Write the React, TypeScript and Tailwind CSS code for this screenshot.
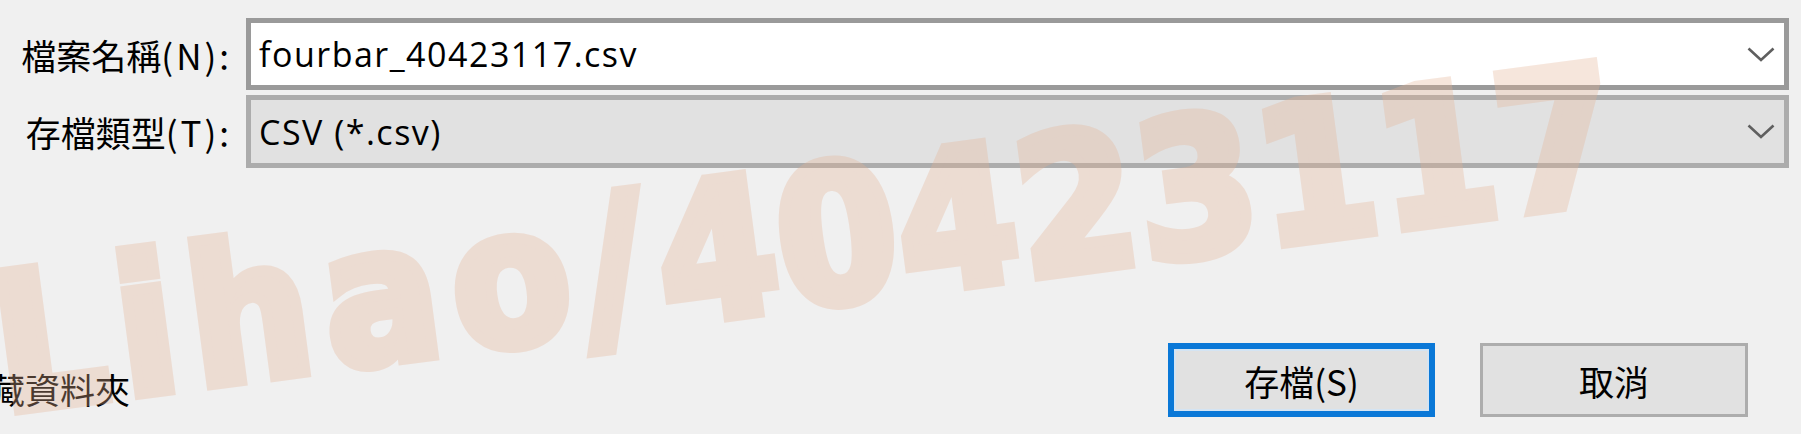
import React from "react";

function Chevron() {
  return (
    <svg width="28" height="15" viewBox="0 0 28 15" fill="none" className="shrink-0">
      <polyline points="1.5,1.5 14,13 26.5,1.5" stroke="#5f5f5f" strokeWidth="2.6" />
    </svg>
  );
}

function Field({ label, value, filled }: { label: React.ReactNode; value: string; filled?: boolean }) {
  return (
    <div className="flex items-center">
      <div className="w-[246px] shrink-0 pr-[14px] text-right text-[35px] leading-none text-black">{label}</div>
      <div
        className={
          filled
            ? "flex h-[73px] w-[1543px] items-center justify-between border-[5px] border-[#acacac] bg-[#e1e1e1] pl-[8px] pr-[9px]"
            : "flex h-[72px] w-[1543px] items-center justify-between border-[5px] border-[#9a9a9a] bg-white pl-[8px] pr-[9px]"
        }
      >
        <span className="font-['Open_Sans','Noto_Sans_CJK_TC',sans-serif] text-[34px] leading-none tracking-[1.5px] text-black">
          {value}
        </span>
        <Chevron />
      </div>
    </div>
  );
}

export default function App() {
  return (
    <div className="relative h-[434px] w-[1801px] overflow-hidden bg-[#f0f0f0] font-['Noto_Sans_CJK_TC',sans-serif]">
      <div className="flex flex-col gap-[5px] pt-[18px]">
        <Field
          label={
            <>
              檔案名稱<span className="tracking-[3px]">(N):</span>
            </>
          }
          value="fourbar_40423117.csv"
        />
        <Field
          label={
            <>
              存檔類型<span className="tracking-[3px]">(T):</span>
            </>
          }
          value="CSV (*.csv)"
          filled
        />
      </div>

      <div className="mt-[175px] flex items-start pr-[53px]">
        <div className="ml-[-45px] mt-[28px] text-[35px] leading-none text-black">隱藏資料夾</div>
        <div className="ml-auto flex gap-[45px]">
          <button className="flex h-[74px] w-[267px] items-center justify-center border-[6px] border-[#0a78d7] bg-[#e1e1e1] text-[35px] leading-none text-black shadow-[inset_0_0_0_2px_#d4e4f3]">
            存檔(S)
          </button>
          <button className="flex h-[74px] w-[268px] items-center justify-center border-[3px] border-[#adadad] bg-[#e1e1e1] text-[35px] leading-none text-black">
            取消
          </button>
        </div>
      </div>

      {/* watermark over the whole dialog */}
      <div className="pointer-events-none absolute left-[4px] top-[252px] z-10 origin-[0_161px] -rotate-[7.5deg] whitespace-nowrap font-['DejaVu_Sans_Condensed','DejaVu_Sans',sans-serif] text-[190px] font-bold leading-none text-[#e6b395] opacity-[0.32] [-webkit-text-stroke:11px_#e6b395]">
        <span className="tracking-[14px]">Lihao/</span>
        <span className="tracking-[2px]">40423117</span>
      </div>
    </div>
  );
}
